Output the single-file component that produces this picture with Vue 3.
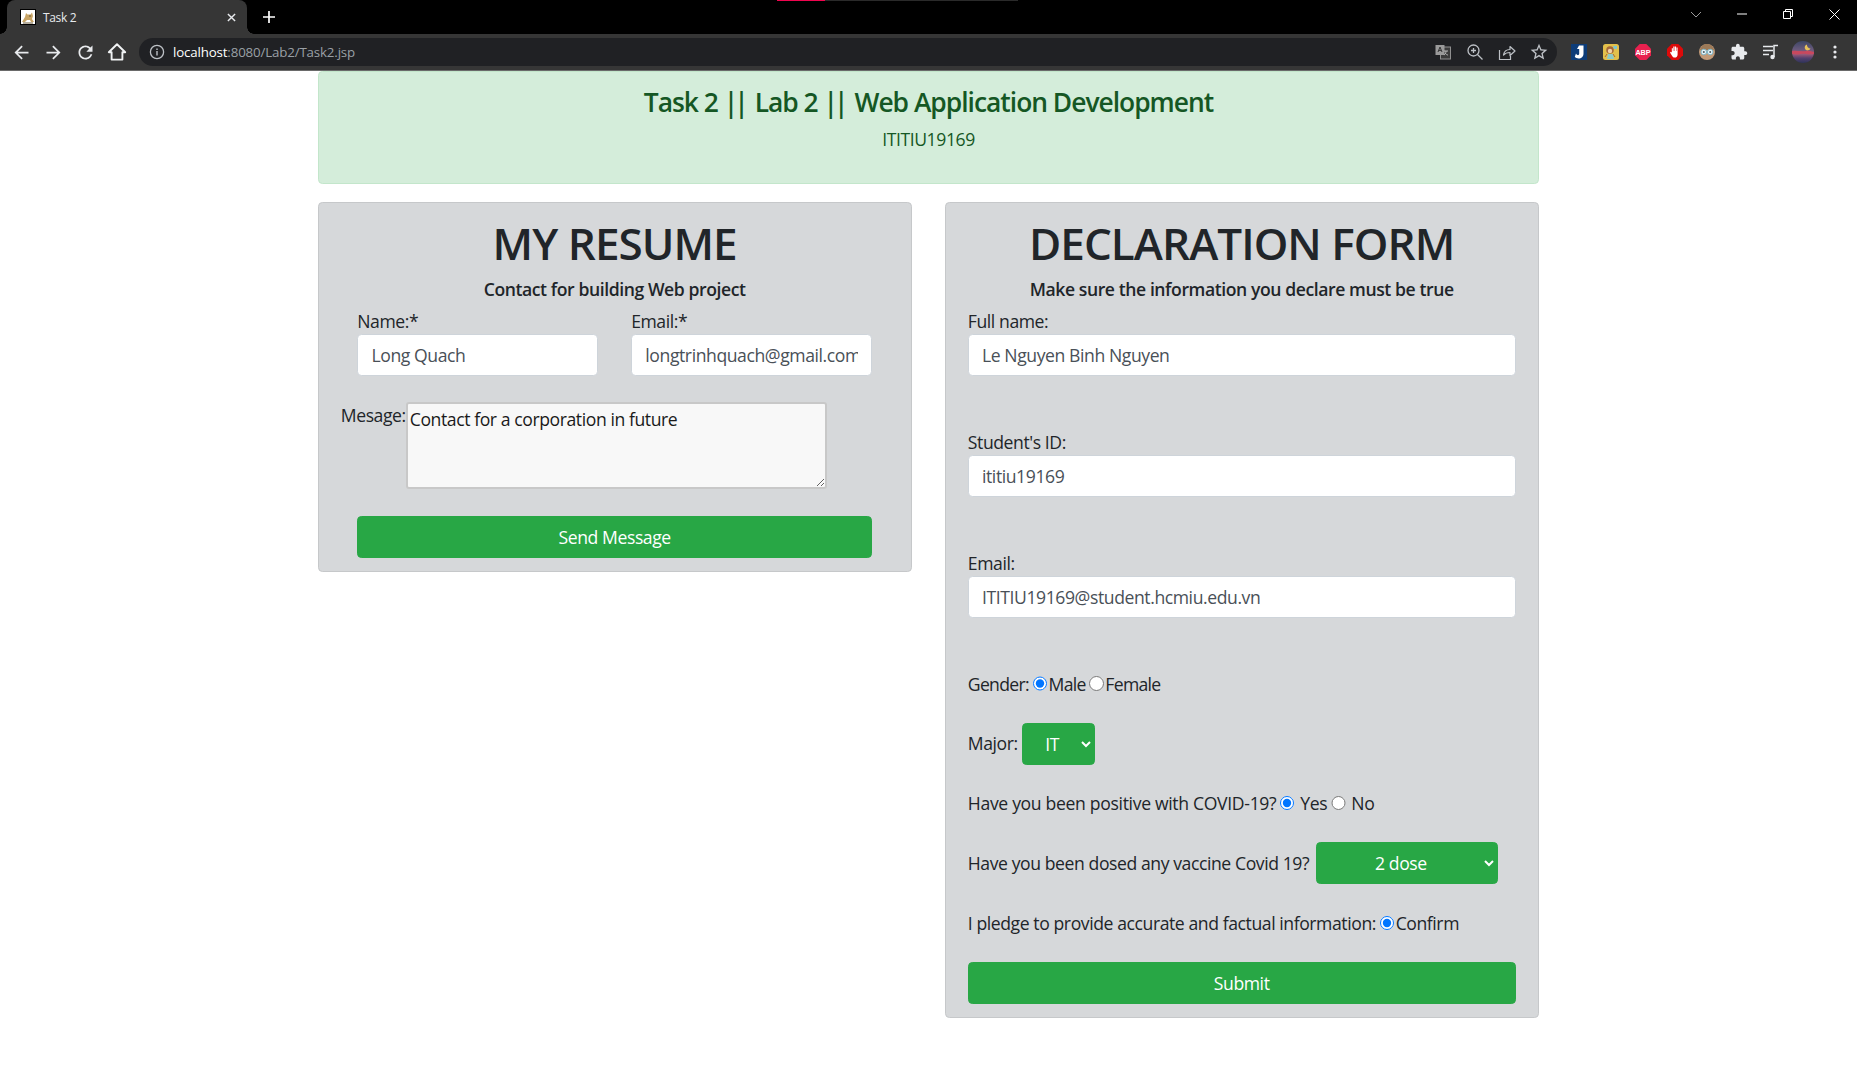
<template>
  <div class="browser">
    <div class="titlebar">
      <i class="load-track"><i class="load-bar"></i></i>
      <div class="tab">
        <svg class="favicon" viewBox="0 0 16 16">
          <rect x="0.5" y="0.5" width="15" height="15" fill="#fff" stroke="#000" />
          <path d="M2 13l3-5 1-4 1.5 1.5h3L12 3.5l1 3.5-1 3 2 3h-3l-1-2H7l-2 2z" fill="#c9a566" />
          <path d="M9 7h2M3 14h10" stroke="#6b5a3a" fill="none" />
        </svg>
        <span class="tab-title">Task 2</span>
        <svg class="tab-close" viewBox="0 0 10 10"><path d="M1 1l8 8M9 1l-8 8" stroke="#e8eaed" stroke-width="1.6" /></svg>
      </div>
      <svg class="new-tab" viewBox="0 0 12 12"><path d="M6 0v12M0 6h12" stroke="#fff" stroke-width="1.7" /></svg>
      <div class="win-controls">
        <span class="win-btn"><svg width="12" height="7" viewBox="0 0 12 7"><path d="M1 1l5 5 5-5" fill="none" stroke="#9b9b9b" /></svg></span>
        <span class="win-btn"><svg width="10" height="2" viewBox="0 0 10 2"><path d="M0 1h10" stroke="#fff" /></svg></span>
        <span class="win-btn"><svg width="10" height="10" viewBox="0 0 10 10"><path d="M.5 2.500h7v7h-7zM2.500 2.500v-2h7v7h-2" fill="none" stroke="#fff" /></svg></span>
        <span class="win-btn"><svg width="11" height="11" viewBox="0 0 11 11"><path d="M.5.5l10 10M10.500.5l-10 10" stroke="#fff" /></svg></span>
      </div>
    </div>

    <div class="toolbar">
      <span class="tool"><svg width="21" height="21" viewBox="0 0 24 24" fill="#e8eaed"><path d="M20 11H7.830l5.590-5.590L12 4l-8 8 8 8 1.410-1.410L7.830 13H20v-2z" /></svg></span>
      <span class="tool"><svg width="21" height="21" viewBox="0 0 24 24" fill="#e8eaed"><path d="M4 11h12.170l-5.590-5.590L12 4l8 8-8 8-1.410-1.410L16.170 13H4v-2z" /></svg></span>
      <span class="tool"><svg width="21" height="21" viewBox="0 0 24 24" fill="#e8eaed"><path d="M17.650 6.350C16.200 4.900 14.210 4 12 4c-4.420 0-7.990 3.580-7.990 8s3.570 8 7.990 8c3.730 0 6.840-2.550 7.730-6h-2.080c-.82 2.330-3.040 4-5.650 4-3.310 0-6-2.690-6-6s2.690-6 6-6c1.660 0 3.140.69 4.220 1.780L13 11h7V4l-2.350 2.350z" /></svg></span>
      <span class="tool"><svg width="20" height="20" viewBox="0 0 20 20"><path d="M10 2.200L1.800 10.200H4.600V17.600H15.400V10.200H18.200z" fill="none" stroke="#f1f3f4" stroke-width="1.900" stroke-linejoin="round" /></svg></span>

      <div class="omnibox">
        <span class="omni-icon">
          <svg width="16" height="16" viewBox="0 0 16 16"><circle cx="8" cy="8" r="6.600" fill="none" stroke="#bdc1c6" stroke-width="1.300" /><path d="M8 7v4.400M8 4.400v1.500" stroke="#bdc1c6" stroke-width="1.400" /></svg>
        </span>
        <span class="url"><b>localhost</b>:8080/Lab2/Task2.jsp</span>
        <span class="omni-right">
          <span class="tool">
            <svg width="16" height="16" viewBox="0 0 16 16"><rect x="5.500" y="3" width="10" height="12" fill="#3c3c3c" stroke="#8f8f8f" /><rect x="0.500" y="1" width="9" height="10" fill="#9a9a9a" /><path d="M3 8l2-5 2 5M3.800 6.400h2.400" fill="none" stroke="#333" /><path d="M9 7h4M11 7c0 2-1 3.500-2 4M10 9c1 1 2 2 3 2" fill="none" stroke="#bbb" /></svg>
          </span>
          <span class="tool">
            <svg width="18" height="18" viewBox="0 0 18 18" fill="none" stroke="#bdc1c6" stroke-width="1.300"><circle cx="7.500" cy="7.500" r="5.500" /><path d="M11.500 11.500L16.500 16.500M5 7.500h5M7.500 5v5" /></svg>
          </span>
          <span class="tool">
            <svg width="18" height="18" viewBox="0 0 18 18" fill="none" stroke="#bdc1c6" stroke-width="1.200"><path d="M1.500 7v9.500h11V13" /><path d="M5.500 12c.5-3.500 3-5.500 6.500-5.500V3.500l5 4.500-5 4.500V9.500c-2.800 0-5 .8-6.500 2.500z" stroke-linejoin="round" /></svg>
          </span>
          <span class="tool">
            <svg width="20" height="20" viewBox="0 0 24 24" fill="#bdc1c6"><path d="M22 9.240l-7.190-.620L12 2 9.190 8.630 2 9.240l5.460 4.730L5.820 21 12 17.270 18.180 21l-1.630-7.030L22 9.240zM12 15.400l-3.760 2.270 1-4.280-3.320-2.880 4.380-.380L12 6.100l1.710 4.040 4.380.380-3.320 2.880 1 4.280L12 15.400z" /></svg>
          </span>
        </span>
      </div>

      <span class="tool">
        <svg width="16" height="16" viewBox="0 0 16 16"><rect width="16" height="16" fill="#0d3c78" /><path d="M8 1.500h4.500v8c0 3.200-2.200 5-4.800 5-1.600 0-3.200-.6-3.900-1.700l1.200-3.200c.6 1.100 1.600 1.700 2.300 1.500.7-.2.900-.7.900-1.500V5H6z" fill="#fff" /></svg>
      </span>
      <span class="tool">
        <svg width="16" height="16" viewBox="0 0 16 16"><rect width="16" height="16" rx="2.500" fill="#e3c04b" /><circle cx="7" cy="6" r="3.800" fill="#a5683a" /><circle cx="7" cy="7" r="2.200" fill="#f2d2a8" /><path d="M10 2h4v3h-3z" fill="#7fc6cf" /><path d="M5 10h5l1 5H4z" fill="#8fcac6" /><path d="M2 13l2-3M12 13l-2-3" stroke="#a5683a" /></svg>
      </span>
      <span class="tool">
        <svg width="16" height="16" viewBox="0 0 16 16"><path d="M4.700 0h6.600L16 4.700v6.600L11.300 16H4.700L0 11.300V4.700z" fill="#e8214f" /><text x="8" y="10.800" text-anchor="middle" class="abp">ABP</text></svg>
      </span>
      <span class="tool">
        <svg width="16" height="16" viewBox="0 0 16 16"><path d="M4.700 0h6.600L16 4.700v6.600L11.300 16H4.700L0 11.300V4.700z" fill="#dc0a0a" /><path d="M4.800 8.500V4.200h1.100V7h.4V2.600h1.200V7h.4V2.400h1.200V7h.4V3.400h1.100v7c0 1.800-1.100 3.200-2.900 3.200-1.500 0-2.100-1-3-2.400L3 8.400l.9-.7z" fill="#fff" /></svg>
      </span>
      <span class="tool">
        <svg width="16" height="16" viewBox="0 0 16 16"><circle cx="8" cy="8" r="8" fill="#c29a78" /><path d="M1 6c1-4 4-6 7-6s6 2 7 6z" fill="#9c7a58" /><circle cx="4.800" cy="8" r="2.800" fill="#e8f3f6" stroke="#7fb7c9" /><circle cx="11.200" cy="8" r="2.800" fill="#e8f3f6" stroke="#7fb7c9" /><circle cx="4.800" cy="8" r="1" fill="#4a5a60" /><circle cx="11.200" cy="8" r="1" fill="#4a5a60" /></svg>
      </span>
      <span class="tool">
        <svg width="18" height="18" viewBox="0 0 24 24" fill="#e8eaed"><path d="M20.500 11H19V7c0-1.100-.9-2-2-2h-4V3.500C13 2.120 11.880 1 10.500 1S8 2.120 8 3.500V5H4c-1.100 0-1.990.9-1.990 2v3.800H3.500c1.490 0 2.700 1.210 2.700 2.700s-1.210 2.700-2.700 2.700H2V20c0 1.100.9 2 2 2h3.800v-1.500c0-1.490 1.210-2.700 2.700-2.700 1.490 0 2.700 1.210 2.700 2.700V22H17c1.100 0 2-.9 2-2v-4h1.500c1.380 0 2.500-1.120 2.500-2.500S21.880 11 20.500 11z" /></svg>
      </span>
      <span class="tool">
        <svg width="16" height="16" viewBox="0 0 16 16"><path d="M0 2.500h10M0 6.500h10M0 10.500h6" stroke="#e8eaed" stroke-width="1.300" /><path d="M11 13V1.500h4" fill="none" stroke="#e8eaed" stroke-width="1.500" /><circle cx="9.500" cy="13" r="2.200" fill="#e8eaed" /></svg>
      </span>
      <span class="tool">
        <span class="avatar">
          <svg width="22" height="22" viewBox="0 0 22 22"><path d="M15 3.500a3 3 0 1 0 3.500 4 3.500 3.500 0 0 1-3.500-4z" fill="#e8c25a" /><path d="M0 10c5-1 9 1 14 0s6 1 8 1v2c-6 1-9-1-13 0s-6 0-9 0z" fill="#c9485e" /></svg>
        </span>
      </span>
      <span class="tool">
        <svg width="4" height="14" viewBox="0 0 4 14" fill="#e8eaed"><circle cx="2" cy="2" r="1.600" /><circle cx="2" cy="7" r="1.600" /><circle cx="2" cy="12" r="1.600" /></svg>
      </span>
    </div>
  </div>

  <div class="container">
    <div class="banner">
      <h4>Task 2 <span class="pipes">||</span> Lab 2 <span class="pipes">||</span> Web Application Development</h4>
      <p>ITITIU19169</p>
    </div>

    <div class="columns">
      <form class="card" @submit.prevent>
        <h1>MY RESUME</h1>
        <h6>Contact for building Web project</h6>
        <div class="pair">
          <div>
            <label>Name:*</label>
            <input class="field" type="text" v-model="contactName" />
          </div>
          <div>
            <label>Email:*</label>
            <input class="field" type="text" v-model="contactEmail" />
          </div>
        </div>
        <div class="message-row">
          <label class="message-label">Mesage:</label>
          <textarea class="message" v-model="message"></textarea>
        </div>
        <div class="send-wrap">
          <button class="btn" type="submit">Send Message</button>
        </div>
      </form>

      <form class="card" @submit.prevent>
        <h1>DECLARATION FORM</h1>
        <h6>Make sure the information you declare must be true</h6>
        <div class="stacked" v-for="item in textFields" :key="item.label">
          <label>{{ item.label }}</label>
          <input class="field" type="text" v-model="item.value" />
        </div>
        <div class="line gender-line">
          Gender:<input class="radio" type="radio" value="M" v-model="gender" />Male<input class="radio" type="radio" value="F" v-model="gender" />Female
        </div>
        <div class="line select-line">
          <span>Major:</span>
          <select class="pick pick-major" v-model="major">
            <option>IT</option>
            <option>CS</option>
          </select>
        </div>
        <div class="line covid-line">
          Have you been positive with COVID-19?<input class="radio" type="radio" value="Y" v-model="covid" /> Yes<input class="radio" type="radio" value="N" v-model="covid" /> No
        </div>
        <div class="line select-line">
          <span>Have you been dosed any vaccine Covid 19?</span>
          <select class="pick pick-dose" v-model="dose">
            <option>1 dose</option>
            <option>2 dose</option>
          </select>
        </div>
        <div class="line">
          I pledge to provide accurate and factual information:<input class="radio" type="radio" checked />Confirm
        </div>
        <button class="btn" type="submit">Submit</button>
      </form>
    </div>
  </div>
</template>

<script setup>
import { reactive, ref } from 'vue'

const contactName = ref('Long Quach')
const contactEmail = ref('longtrinhquach@gmail.com')
const message = ref('Contact for a corporation in future')

const textFields = reactive([
  { label: 'Full name:', value: 'Le Nguyen Binh Nguyen' },
  { label: "Student's ID:", value: 'ititiu19169' },
  { label: 'Email:', value: 'ITITIU19169@student.hcmiu.edu.vn' }
])

const gender = ref('M')
const major = ref('IT')
const covid = ref('Y')
const dose = ref('2 dose')
</script>

<style>
body {
  background: #fff;
}
</style>

<style scoped>
.browser {
  height: 71px;
  background: #363636;
  border-bottom: 1px solid #6a6a6a;
  box-sizing: border-box;
  font-family: "Open Sans", "Noto Sans", sans-serif;
}

.titlebar {
  position: relative;
  display: flex;
  align-items: flex-end;
  height: 34px;
  background: #000;
}

.load-track {
  position: absolute;
  left: 777px;
  top: 0;
  width: 241px;
  height: 1px;
  background: #2a2a2a;
}

.load-bar {
  display: block;
  width: 48px;
  height: 1px;
  background: #f0054f;
}

.tab {
  position: relative;
  display: flex;
  align-items: center;
  width: 240px;
  height: 34px;
  margin-left: 7px;
  padding: 0 11px 0 13px;
  box-sizing: border-box;
  background: #363636;
  border-radius: 8px 8px 0 0;
}

.tab::before,
.tab::after {
  content: "";
  position: absolute;
  bottom: 0;
  width: 7px;
  height: 7px;
}

.tab::before {
  left: -7px;
  background: radial-gradient(circle at 0 0, #000 6.500px, #363636 7px);
}

.tab::after {
  right: -7px;
  background: radial-gradient(circle at 100% 0, #000 6.500px, #363636 7px);
}

.favicon {
  width: 16px;
  height: 16px;
}

.tab-title {
  flex: 1;
  margin-left: 7px;
  color: #e8eaed;
  font-size: 12px;
  letter-spacing: -0.350px;
}

.tab-close {
  width: 9px;
  height: 9px;
}

.new-tab {
  width: 12px;
  height: 12px;
  margin: 0 0 11px 16px;
}

.win-controls {
  display: flex;
  margin-left: auto;
  height: 28px;
  align-self: flex-start;
}

.win-btn {
  display: flex;
  align-items: center;
  justify-content: center;
  width: 46px;
}

.toolbar {
  display: flex;
  align-items: center;
  height: 36px;
  padding: 0 6px 0 5px;
}

.tool {
  display: flex;
  align-items: center;
  justify-content: center;
  flex: none;
  width: 32px;
  height: 28px;
}

.omnibox {
  display: flex;
  align-items: center;
  flex: 1;
  height: 28px;
  margin: 0 6px;
  padding: 0 2px;
  background: #202124;
  border-radius: 14px;
}

.omni-icon {
  display: flex;
  justify-content: center;
  width: 32px;
}

.url {
  color: #9aa0a6;
  font-size: 13.300px;
  letter-spacing: -0.150px;
}

.url b {
  color: #fff;
  font-weight: 400;
}

.omni-right {
  display: flex;
  margin-left: auto;
}

.abp {
  fill: #fff;
  font-family: "Liberation Sans", sans-serif;
  font-size: 7.200px;
  font-weight: 700;
}

.avatar {
  display: block;
  width: 22px;
  height: 22px;
  overflow: hidden;
  border-radius: 50%;
  background: linear-gradient(180deg, #3c4666 0%, #6a5a7c 40%, #9c5a78 60%, #54406e 78%, #2d3358 100%);
}

.avatar svg {
  display: block;
}

.container {
  width: 1221px;
  margin: 0 auto;
  color: #212529;
  font-family: "Open Sans", "Noto Sans", sans-serif;
  font-size: 17.600px;
  line-height: 26.400px;
  letter-spacing: -0.420px;
}

.banner {
  height: 113px;
  padding: 13.200px 22px;
  margin-bottom: 18px;
  box-sizing: border-box;
  background: #d4edda;
  border: 1.100px solid #c3e6cb;
  border-radius: 4.400px;
  color: #155724;
  text-align: center;
}

.banner h4 {
  margin: 0 0 6.800px;
  padding-top: 2px;
  font-size: 26.400px;
  font-weight: 600;
  line-height: 31.700px;
  letter-spacing: -1px;
}

.pipes {
  letter-spacing: -4px;
  margin-right: 4px;
}

.banner p {
  margin: 0;
}

.columns {
  display: grid;
  grid-template-columns: 594px 594px;
  gap: 33px;
  align-items: start;
}

.card {
  padding: 13.200px 22.500px 13.200px 21.800px;
  background: #d6d8da;
  border: 1.100px solid #c6c8ca;
  border-radius: 4.400px;
}

h1 {
  margin: 0 0 7.800px;
  padding-top: 1px;
  font-size: 44px;
  font-weight: 600;
  line-height: 52.800px;
  letter-spacing: -0.950px;
  text-align: center;
}

h6 {
  margin: 0 0 7.800px;
  padding-top: 1px;
  font-size: 17.600px;
  font-weight: 600;
  line-height: 21.100px;
  text-align: center;
}

label {
  display: block;
}

.field {
  display: block;
  width: 100%;
  height: 41.800px;
  padding: 6.600px 13.200px;
  box-sizing: border-box;
  background: #fff;
  border: 1.100px solid #ced4da;
  border-radius: 4.400px;
  color: #495057;
  font: inherit;
  letter-spacing: inherit;
}

.pair {
  display: grid;
  grid-template-columns: 1fr 1fr;
  gap: 33px;
  padding: 0 16.500px;
}

.message-row {
  display: flex;
  align-items: flex-start;
  margin: 26.400px 0 27px;
}

label.message-label {
  flex: none;
  width: 65px;
}

.message {
  display: block;
  width: 421px;
  height: 87px;
  padding: 2px;
  box-sizing: border-box;
  background: #f8f8f8;
  border: 2px solid #c8c8c8;
  border-radius: 3px;
  color: #1a1a1a;
  font: inherit;
  letter-spacing: inherit;
}

.send-wrap {
  padding: 0 16.500px;
}

.btn {
  display: block;
  width: 100%;
  height: 41.800px;
  background: #28a745;
  border: 1.100px solid #28a745;
  border-radius: 4.400px;
  color: #fff;
  font: inherit;
  letter-spacing: inherit;
  text-align: center;
}

.stacked {
  margin-bottom: 52.800px;
}

.line {
  margin-bottom: 25.700px;
}

.gender-line {
  letter-spacing: -0.700px;
}

.covid-line {
  letter-spacing: -0.330px;
}

.select-line {
  display: flex;
  align-items: center;
  gap: 4px;
}

.radio {
  width: 14.300px;
  height: 14.300px;
  margin: 3.300px 1.600px 0 3.800px;
  accent-color: #0075ff;
}

.pick {
  height: 41.800px;
  padding: 6.600px 13.200px;
  background: #28a745;
  border: 1.100px solid #28a745;
  border-radius: 4.400px;
  color: #fff;
  font: inherit;
  letter-spacing: inherit;
  text-align: center;
}

.pick-major {
  width: 73px;
}

.pick-dose {
  width: 182.500px;
  margin-left: 2.500px;
}
</style>
